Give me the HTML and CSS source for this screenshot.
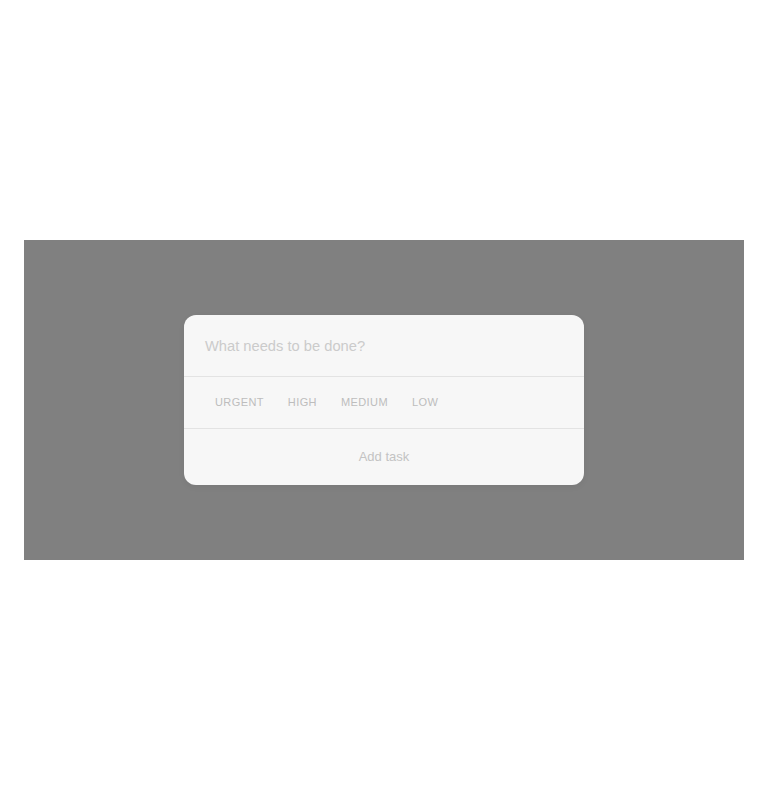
FILE: index.html
```html
<!DOCTYPE html>
<html>
<head>
<meta charset="utf-8">
<link rel="stylesheet" href="styles.css">
</head>
<body>
<div class="page">
  <div class="overlay">
    <div class="card">
      <div class="input-row">What needs to be done?</div>
      <div class="priority-row">
        <span class="prio">URGENT</span>
        <span class="prio">HIGH</span>
        <span class="prio">MEDIUM</span>
        <span class="prio">LOW</span>
      </div>
      <div class="action-row">Add task</div>
    </div>
  </div>
</div>
</body>
</html>
```
FILE: styles.css
```css
html, body {
  margin: 0;
  padding: 0;
  background: #ffffff;
  font-family: "Liberation Sans", Arial, sans-serif;
}
.page {
  padding: 240px 24px;
}
.overlay {
  height: 320px;
  background: #808080;
  display: flex;
  align-items: center;
  justify-content: center;
}
.card {
  width: 400px;
  background: #f7f7f7;
  border-radius: 12px;
  box-shadow: 0 2px 6px rgba(0,0,0,0.06);
}
.input-row {
  height: 62px;
  box-sizing: border-box;
  padding: 0 21px;
  display: flex;
  align-items: center;
  font-size: 14.7px;
  color: #cbcbcb;
  border-bottom: 1px solid #e3e3e3;
}
.priority-row {
  height: 52px;
  box-sizing: border-box;
  padding: 0 19px 2px;
  display: flex;
  align-items: center;
  border-bottom: 1px solid #e3e3e3;
}
.prio {
  padding: 4px 12px;
  font-size: 11px;
  letter-spacing: 0.4px;
  color: #bdbdbd;
}
.action-row {
  height: 56px;
  box-sizing: border-box;
  padding-bottom: 2px;
  display: flex;
  align-items: center;
  justify-content: center;
  font-size: 13px;
  color: #c3c3c3;
}
```
